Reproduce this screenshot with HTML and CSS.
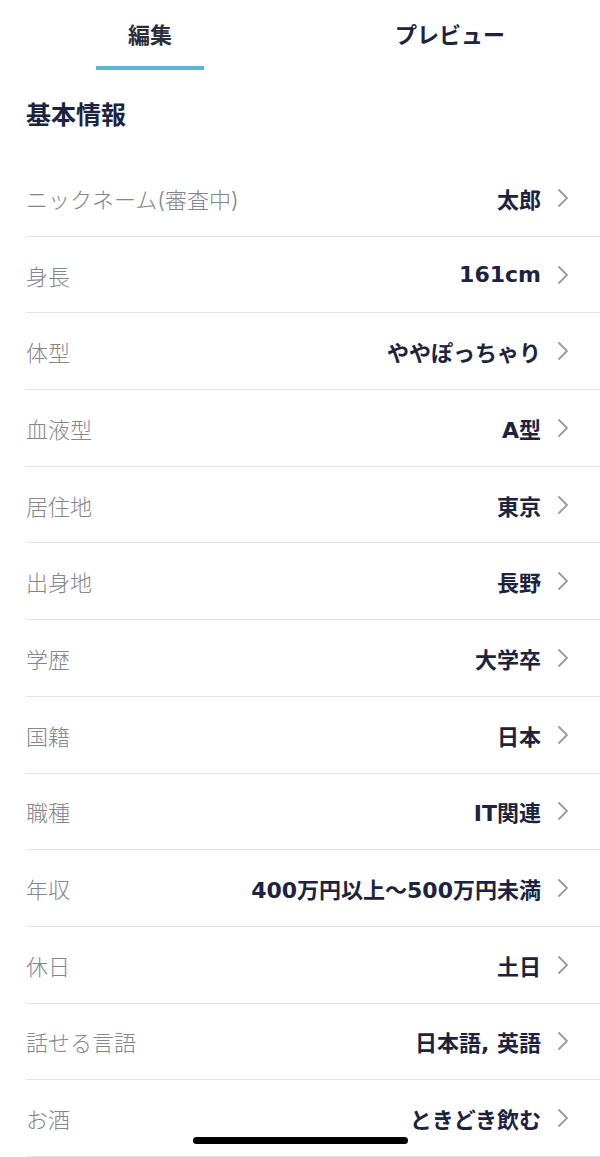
FILE: index.html
```html
<!DOCTYPE html>
<html>
    <head>
        <title>プロフィール編集</title>
        <link rel="stylesheet" href="styles.css">
    </head>
    <body>
        <div class="tabs">
            <div class="tab active"><span class="tab-label">編集</span><span class="tab-bar"></span></div>
            <div class="tab"><span class="tab-label">プレビュー</span><span class="tab-bar"></span></div>
        </div>

        <h2 class="section-head">基本情報</h2>

        <ul class="info-list">
            <li class="row"><span class="label">ニックネーム(審査中)</span><span class="value">太郎</span><svg class="chev" viewBox="0 0 12 20"><path d="M2 2l8 8-8 8"/></svg></li>
            <li class="row"><span class="label">身長</span><span class="value">161cm</span><svg class="chev" viewBox="0 0 12 20"><path d="M2 2l8 8-8 8"/></svg></li>
            <li class="row"><span class="label">体型</span><span class="value">ややぽっちゃり</span><svg class="chev" viewBox="0 0 12 20"><path d="M2 2l8 8-8 8"/></svg></li>
            <li class="row"><span class="label">血液型</span><span class="value">A型</span><svg class="chev" viewBox="0 0 12 20"><path d="M2 2l8 8-8 8"/></svg></li>
            <li class="row"><span class="label">居住地</span><span class="value">東京</span><svg class="chev" viewBox="0 0 12 20"><path d="M2 2l8 8-8 8"/></svg></li>
            <li class="row"><span class="label">出身地</span><span class="value">長野</span><svg class="chev" viewBox="0 0 12 20"><path d="M2 2l8 8-8 8"/></svg></li>
            <li class="row"><span class="label">学歴</span><span class="value">大学卒</span><svg class="chev" viewBox="0 0 12 20"><path d="M2 2l8 8-8 8"/></svg></li>
            <li class="row"><span class="label">国籍</span><span class="value">日本</span><svg class="chev" viewBox="0 0 12 20"><path d="M2 2l8 8-8 8"/></svg></li>
            <li class="row"><span class="label">職種</span><span class="value">IT関連</span><svg class="chev" viewBox="0 0 12 20"><path d="M2 2l8 8-8 8"/></svg></li>
            <li class="row"><span class="label">年収</span><span class="value">400万円以上〜500万円未満</span><svg class="chev" viewBox="0 0 12 20"><path d="M2 2l8 8-8 8"/></svg></li>
            <li class="row"><span class="label">休日</span><span class="value">土日</span><svg class="chev" viewBox="0 0 12 20"><path d="M2 2l8 8-8 8"/></svg></li>
            <li class="row"><span class="label">話せる言語</span><span class="value">日本語, 英語</span><svg class="chev" viewBox="0 0 12 20"><path d="M2 2l8 8-8 8"/></svg></li>
            <li class="row"><span class="label">お酒</span><span class="value">ときどき飲む</span><svg class="chev" viewBox="0 0 12 20"><path d="M2 2l8 8-8 8"/></svg></li>
        </ul>

        <div class="home-bar"></div>
    </body>
</html>
```
FILE: styles.css
```css
* {
    box-sizing: border-box;
    margin: 0;
    padding: 0;
}

body {
    font-family: Inter, "Noto Sans CJK JP", sans-serif;
    background: #ffffff;
    color: #1c2340;
    height: 100vh;
    overflow: hidden;
}

.tabs {
    display: flex;
    height: 70px;
}

.tab {
    flex: 1;
    display: flex;
    flex-direction: column;
    align-items: center;
    justify-content: space-between;
    padding-top: 20px;
}

.tab-label {
    font-size: 22px;
    font-weight: bold;
    line-height: 30px;
    color: #1c2340;
}

.tab.active .tab-label {
    color: #2a2d3a;
}

.tab-bar {
    width: 108px;
    height: 4px;
}

.tab.active .tab-bar {
    background: #5fb6d2;
}

.section-head {
    font-size: 25px;
    font-weight: bold;
    line-height: 34px;
    padding: 0 26px;
    margin-top: 28px;
    margin-bottom: 28px;
}

.info-list {
    list-style: none;
}

.row {
    display: flex;
    align-items: center;
    height: 76.7px;
    margin-left: 26px;
    padding-right: 31px;
    border-bottom: 1px solid #e4e4e7;
}

.label {
    flex: 1;
    font-size: 22px;
    font-weight: 300;
    color: #85858c;
}

.value {
    font-family: "DejaVu Sans", "Noto Sans CJK JP", sans-serif;
    font-size: 22px;
    font-weight: bold;
    color: #1c2340;
}

.chev {
    width: 12px;
    height: 20px;
    margin-left: 16px;
    fill: none;
    stroke: #9b9ba0;
    stroke-width: 1.8;
    stroke-linecap: round;
    stroke-linejoin: round;
}

.home-bar {
    position: fixed;
    left: 193px;
    bottom: 13px;
    width: 215px;
    height: 7px;
    border-radius: 4px;
    background: #000000;
}
```
